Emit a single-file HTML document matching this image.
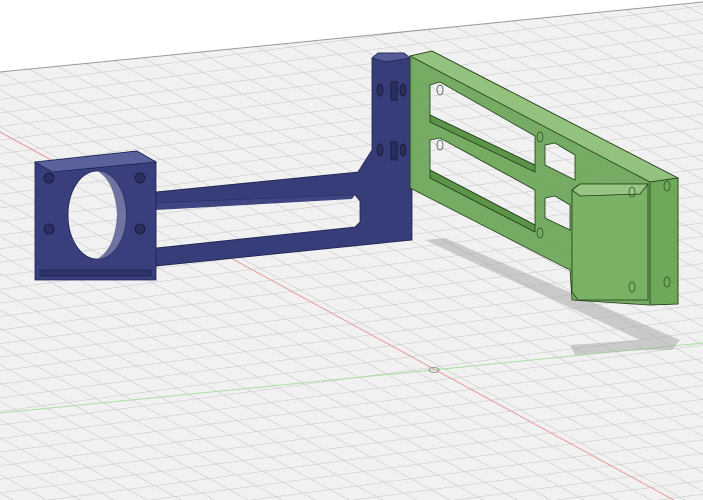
<!DOCTYPE html>
<html><head><meta charset="utf-8"><style>
html,body{margin:0;padding:0;background:#fff;}
svg{display:block;}
</style></head><body>
<svg width="703" height="500" viewBox="0 0 703 500" xmlns="http://www.w3.org/2000/svg">
<defs>
<pattern id="g" width="1" height="1" patternUnits="userSpaceOnUse" patternTransform="matrix(27 -3.6 20 10.9 0 72)">
<rect width="1" height="1" fill="#f1f1f1"/>
<rect width="1" height="0.045" fill="#cdcdcd"/>
<rect width="0.04" height="1" fill="#cdcdcd"/>
</pattern>
<clipPath id="floor"><polygon points="0,72 703,2 703,500 0,500"/></clipPath>
</defs>
<rect width="703" height="500" fill="#fff"/>
<g clip-path="url(#floor)">
<rect width="703" height="500" fill="url(#g)"/>
</g>
<line x1="0" y1="72" x2="703" y2="2" stroke="#999" stroke-width="1"/>
<line x1="0" y1="132" x2="703" y2="516" stroke="#e89a9a" stroke-width="1"/>
<line x1="0" y1="413" x2="703" y2="343" stroke="#a8e0a0" stroke-width="1"/>
<ellipse cx="434" cy="370" rx="5" ry="2.5" fill="none" stroke="#999"/>
<polygon points="425,240 445,238 680,340 672,350 640,350 575,355 570,345 640,340" fill="#aaa" opacity="0.55"/>
<!-- blue part -->
<g stroke="#1e2250" stroke-width="0.8">
<polygon points="372,58 378,53 404,53 412,60 412,240 156,266 156,192 358,172 372,150" fill="#363d78"/>
<polygon points="372,58 378,53 404,53 410,58 386,62" fill="#555b96"/>
<polygon points="156,203 355,195 360,201 360,222 355,227 156,248" fill="url(#g)"/>
<polygon points="156,203 355,195 352,199 156,210" fill="#3e4580" stroke="none"/>
<polygon points="35,162 137,151 156,162 156,280 35,280" fill="#393f7c"/>
<polygon points="35,162 137,151 156,162 52,172" fill="#5b619b"/>
<ellipse cx="97" cy="215" rx="29" ry="44" fill="url(#g)"/>
<path d="M97,171 a29,44 0 0 1 0,88 q18,-10 20,-44 q-2,-34 -20,-44z" fill="#6e739f" stroke="none"/>
<rect x="40" y="270" width="111" height="6" fill="#2e3468"/>
</g>
<g fill="#2a2f60" stroke="#15183a" stroke-width="0.8">
<circle cx="49" cy="178" r="5"/><circle cx="140" cy="178" r="5"/>
<circle cx="49" cy="229" r="5"/><circle cx="140" cy="229" r="5"/>
<ellipse cx="380" cy="90" rx="3" ry="6"/><ellipse cx="380" cy="150" rx="3" ry="6"/>
<ellipse cx="403" cy="90" rx="3" ry="6"/><ellipse cx="403" cy="150" rx="3" ry="6"/>
<rect x="391" y="82" width="6" height="18"/><rect x="391" y="142" width="6" height="18"/>
</g>
<!-- green part -->
<g stroke="#1f3a15" stroke-width="0.8">
<polygon points="410,56 432,51 678,178 678,304 648,305 572,300 570,270 410,188" fill="#6fa85b" opacity="0.95"/>
<polygon points="410,56 432,51 678,178 650,182" fill="#93c27e"/>
<polygon points="430,85 440,82 535,136 535,165 430,115" fill="url(#g)"/>
<polygon points="430,140 440,138 535,190 535,225 430,170" fill="url(#g)"/>
<polygon points="545,145 555,143 575,155 575,180 545,165" fill="url(#g)"/>
<polygon points="545,198 555,196 570,205 570,230 545,218" fill="url(#g)"/>
<polygon points="430,115 535,165 535,172 430,122" fill="#5b9449"/>
<polygon points="430,170 535,225 535,232 430,178" fill="#5b9449"/>
<polygon points="650,182 678,178 678,304 650,305" fill="#6ea85a"/>
<polygon points="572,190 580,184 648,184 648,300 578,300 572,292" fill="#79b165"/>
<polygon points="572,190 580,184 648,184 640,194 580,196" fill="#97c684"/>
</g>
<g fill="none" stroke="#2a4a20" stroke-width="0.7">
<ellipse cx="440" cy="90" rx="3" ry="5"/><ellipse cx="440" cy="145" rx="3" ry="5"/>
<ellipse cx="540" cy="137" rx="3" ry="5"/><ellipse cx="540" cy="233" rx="3" ry="5"/>
<ellipse cx="667" cy="186" rx="3" ry="5"/><ellipse cx="667" cy="282" rx="3" ry="5"/>
<ellipse cx="632" cy="192" rx="3" ry="5"/><ellipse cx="632" cy="287" rx="3" ry="5"/>
</g>
</svg>
</body></html>
